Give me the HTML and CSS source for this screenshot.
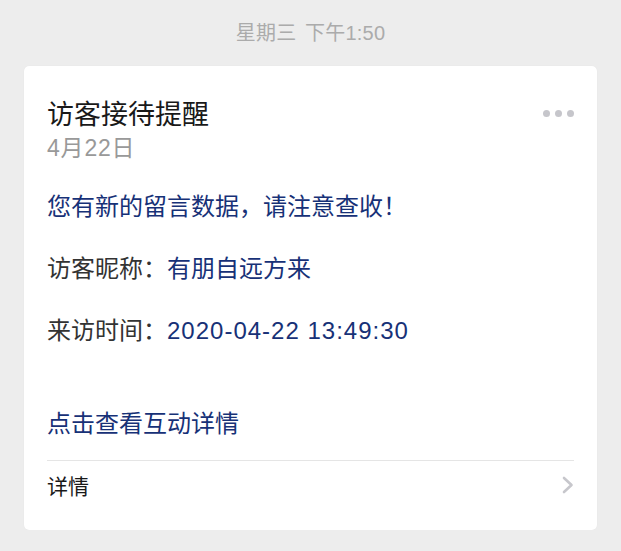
FILE: index.html
```html
<!DOCTYPE html>
<html lang="zh-CN">
<head>
    <meta charset="utf-8">
    <meta name="viewport" content="width=device-width, initial-scale=1.0">
    <title>访客接待提醒</title>
    <link rel="stylesheet" href="styles.css">
</head>
<body>
    <div class="chat">
        <div class="time">星期三 下午1:50</div>

        <div class="card">
            <div class="card-head">
                <div class="title">访客接待提醒</div>
                <span class="more"><i></i><i></i><i></i></span>
            </div>
            <div class="date">4月22日</div>

            <p class="first">您有新的留言数据，请注意查收！</p>
            <p class="field"><span class="label">访客昵称：</span>有朋自远方来</p>
            <p class="field"><span class="label">来访时间：</span><span class="num">2020-04-22 13:49:30</span></p>
            <p class="remark">点击查看互动详情</p>

            <div class="detail">
                <span>详情</span>
                <svg class="arrow" width="12" height="18" viewBox="0 0 12 18">
                    <polyline points="2,2 9.5,9 2,16" fill="none" stroke="#c7c7cc" stroke-width="2.6" stroke-linecap="round" stroke-linejoin="round"/>
                </svg>
            </div>
        </div>
    </div>
</body>
</html>
```

FILE: styles.css
```css
/* ページ全体 */
body {
    margin: 0;
    background-color: #ededed;
    font-family: "Liberation Sans", "Noto Sans CJK SC", sans-serif;
}

.chat {
    padding: 21px 24px 0 24px;
}

/* 時刻 */
.time {
    text-align: center;
    font-size: 20px;
    line-height: 24px;
    letter-spacing: 0.2px;
    word-spacing: 3px;
    color: #ababab;
}

/* カード */
.card {
    margin-top: 21px;
    background-color: #fff;
    border-radius: 5px;
    padding: 32px 23px 21px 23px;
    box-shadow: 0 0 1px rgba(0, 0, 0, 0.08);
}

.card-head {
    display: flex;
    justify-content: space-between;
    align-items: center;
}

.title {
    font-size: 27px;
    line-height: 34px;
    color: #191919;
}

.more {
    display: flex;
    gap: 5px;
    margin-top: -4px;
}

.more i {
    display: block;
    width: 7px;
    height: 7px;
    border-radius: 50%;
    background-color: #c6c6cb;
}

.date {
    font-size: 23px;
    line-height: 32px;
    letter-spacing: 0.8px;
    color: #999;
}

/* 本文 */
.card p {
    margin: 0;
    font-size: 24px;
    line-height: 36px;
    color: #173177;
}

.card p.first {
    margin-top: 25px;
}

.card p.field {
    margin-top: 26px;
}

.label {
    color: #333;
}

/* 日時の数字 */
.num {
    letter-spacing: 1px;
}

.card p.remark {
    margin-top: 57px;
}

/* 詳細 */
.detail {
    margin-top: 18px;
    border-top: 1px solid #e5e5e5;
    height: 48px;
    display: flex;
    justify-content: space-between;
    align-items: center;
    font-size: 21px;
    color: #191919;
}

.arrow {
    display: block;
}
```
